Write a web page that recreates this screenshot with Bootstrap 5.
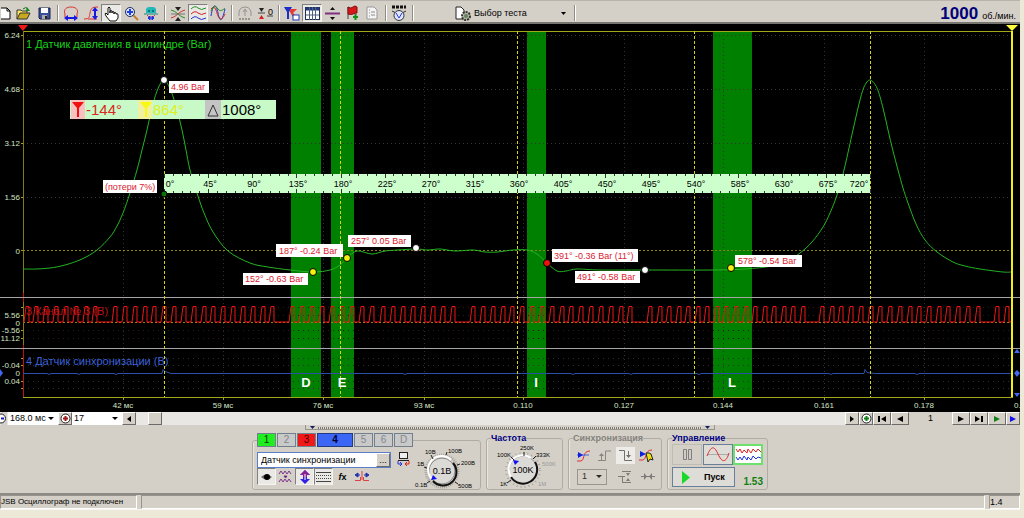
<!DOCTYPE html>
<html lang="ru">
<head>
<meta charset="utf-8">
<meta name="viewport" content="width=device-width, initial-scale=1">
<title>USB Осциллограф</title>
<link href="https://cdn.jsdelivr.net/npm/bootstrap@5.3.0/dist/css/bootstrap.min.css" rel="stylesheet">
<script src="https://cdn.jsdelivr.net/npm/bootstrap@5.3.0/dist/js/bootstrap.bundle.min.js"></script>
<style>
  :root { --face: #d4d0c8; --hi: #f6f4ee; --lo: #808080; }
  body { background: #ece9d8; font: 9px/10px "Liberation Sans", sans-serif; color: #000; }
  .app { margin-right: 4px; background: var(--face); }
  .btn { --bs-btn-padding-x: 0; --bs-btn-padding-y: 0; --bs-btn-font-size: 9px; --bs-btn-line-height: 10px; --bs-btn-border-radius: 0; --bs-btn-color: #000; --bs-btn-disabled-border-color: transparent; display: inline-flex; align-items: center; justify-content: center; flex: none; }
  .btn svg, .glyph { display: block; flex: none; overflow: visible; }
  .toolbar { height: 24px; padding-top: 3px; border-top: 1px solid #b8b4ac; border-bottom: 2px solid #77756f; overflow: hidden; }
  .tool { width: 20px; height: 18px; }
  .tool-first { width: 14px; }
  .tool.active, .mini.active { background: #ebe9e5; border-color: var(--lo) var(--hi) var(--hi) var(--lo); }
  .tool:disabled { border-color: transparent; }
  .rule { width: 7px; height: 16px; flex: none; background: linear-gradient(90deg, transparent 3px, #908c84 3px 4px, #fff 4px 5px, transparent 5px); }
  .test-menu { width: 117px; margin-left: 38px; gap: 3px; justify-content: flex-start; height: 18px; }
  .rpm { font-size: 17px; font-weight: 700; color: #000078; line-height: 17px; }
  .scope { display: block; width: 100%; height: auto; background: #000; }
  .scroller { height: 13px; background: #e9e7e3; }
  .step { height: 13px; background: var(--face); border: 1px solid; border-color: #fff #6c6a66 #6c6a66 #fff; }
  .w-step { width: 18px; } .w-small { width: 14px; }
  .thumb { margin-left: 12px; }
  .pick { appearance: none; border: 0; border-radius: 0; padding: 0 0 0 2px; height: 13px; width: 50px; font-size: 9px; line-height: 13px; background: #fff url("data:image/svg+xml,%3Csvg xmlns='http://www.w3.org/2000/svg' width='6' height='3'%3E%3Cpath d='M0 0h6L3 3z'/%3E%3C/svg%3E") no-repeat right 4px center; }
  .pick-sync { width: 36px; height: 16px; border: 1px solid #8c8880; background-color: var(--face); padding-left: 4px; opacity: .8; }
  .page-no { width: 43px; line-height: 13px; background: var(--face); }
  .splitter { width: 410px; height: 5px; border: 1px solid #98948c; border-top: 0; background: repeating-linear-gradient(90deg, #77756f 0 1px, #dedbd4 1px 2px) 12px 2px / 384px 2px no-repeat; }
  .panel { padding: 3px 0; gap: 5px; border-bottom: 2px solid #8c8a84; }
  .gbox { min-width: 0; height: 57px; border: 1px solid #b0aca4; border-radius: 3px; padding: 0 4px; flex: none; box-shadow: inset 1px 0 0 #e8e5de; }
  .gbox legend { float: none; width: auto; margin: 0; font-size: 9px; line-height: 10px; font-weight: 700; color: #000080; }
  .gbox .off-title { color: #84827c; }
  .g-chan { width: 229px; } .g-freq { width: 77px; } .g-sync { width: 94px; } .g-ctl { width: 101px; }
  .chan-row { gap: 1px; }
  .chan { width: 19px; height: 14px; border: 1px solid #70808c; color: #84888c; background: #c8c9c8; font-size: 10px; }
  .chan-wide { width: 36px; }
  .chan-1 { background: #20ee20; color: #064006; } .chan-3 { background: #f01818; color: #500000; } .chan-4 { background: #3c66f4; color: #000030; font-weight: 700; border-color: #223a80; }
  .name-box { width: 134px; height: 16px; background: #fff; border: 1px solid #5a7ec8; }
  .name-box input { min-width: 0; font-size: 9px; border: 0; padding: 0 0 0 3px; background: transparent; }
  .mini { width: 19px; height: 17px; }
  .mini:disabled { border-color: transparent; opacity: .6; }
  .mini.lit { background: #fff; }
  .ctl-rows { display: grid; gap: 2px; padding-top: 1px; }
  .ctl { width: 30px; height: 21px; border: 1px solid #6a8098; background: #dedcd7; }
  .ctl-off { border-color: #b4b2ac; background: #cfccc5; }
  .ctl-off:disabled { border-color: #b4b2ac; }
  .ctl-on { background: #fff; border: 2px solid #6ee06e; }
  .start { width: 63px; height: 20px; border: 1px solid #6a8098; background: #dedcd7; font-weight: 700; gap: 14px; }
  .ver { color: #108010; font-size: 10px; font-weight: 700; }
  .status { height: 15px; border-bottom: 1px solid #f8f6f0; }
  .cell { border: 1px solid; border-color: #98948c #fff #fff #98948c; line-height: 12px; white-space: nowrap; overflow: hidden; }
  .cell-first { width: 137px; font-size: 8px; } .cell-last { width: 31px; }
  svg text { font-family: "Liberation Sans", sans-serif; }
  .axis text { font-size: 8px; fill: #d4e4c4; }
  .ttl { font-size: 11px; }
</style>
</head>
<body>
<main class="app">
  <div class="toolbar d-flex align-items-center" role="toolbar" aria-label="Инструменты">
    <button class="btn tool tool-first" aria-label="Новый"><svg width="12" height="14" viewBox="0 0 12 14"><path d="M0 2h6l3 3v8H0" fill="#fff" stroke="#000"/><path d="M6 2v3h3" fill="none" stroke="#000"/></svg></button>
    <button class="btn tool" aria-label="Открыть"><svg width="16" height="14" viewBox="0 0 16 14"><path d="M1 13V4h4l1 1h5v3" fill="#ffe860" stroke="#333"/><path d="M1 13l3-6h10l-3 6z" fill="#c8a820" stroke="#333"/><path d="M7 3q3-3 5 0" fill="none" stroke="#0a7010"/><path d="M11 1l3 4h-4z" fill="#0a9010"/></svg></button>
    <button class="btn tool" aria-label="Сохранить"><svg width="13" height="13" viewBox="0 0 13 13"><path d="M1 1h11v11H2l-1-1z" fill="#3850a0" stroke="#182040"/><path d="M3 1h7v5H3z" fill="#fff"/><path d="M4 8h5v4H4z" fill="#aaa"/><path d="M7 9h2v3H7z" fill="#222"/></svg></button>
    <span class="rule"></span>
    <button class="btn tool" aria-label="Цикл"><svg width="16" height="15" viewBox="0 0 16 15"><path d="M2 8C0 3 4 1 8 1s8 2 6 7M2 8v3M14 8v3" fill="none" stroke="#e03030"/><path d="M4 12h8" stroke="#1818e0" stroke-width="2"/><path d="M1 12l4-3v6zM15 12l-4-3v6z" fill="#1818e0"/></svg></button>
    <button class="btn tool" aria-label="Амплитуда"><svg width="16" height="15" viewBox="0 0 16 15"><path d="M1 13c6 0 5-2 6-6s1-6 8-6M5 13h9" fill="none" stroke="#e03030"/><path d="M12 4v7" stroke="#1818e0" stroke-width="2"/><path d="M12 1l3 4H9zM12 14l3-4H9z" fill="#1818e0"/></svg></button>
    <button class="btn tool active" aria-label="Рука"><svg width="15" height="15" viewBox="0 0 15 15"><path d="M4 9V2q1-2 2 0v5V5q1-1 2 0v2-1q1-1 2 0v2-1q1-1 2 0v1q2-1 2 1v3l-2 3H6L2 10q-2-3 0-3z" fill="#fff" stroke="#111"/></svg></button>
    <button class="btn tool" aria-label="Увеличить"><svg width="15" height="15" viewBox="0 0 15 15"><path d="M9 9l5 5" stroke="#c08030" stroke-width="2"/><circle cx="6" cy="6" r="4.500" fill="#dce8ff" stroke="#222a60"/><path d="M3 6h6M6 3v6" stroke="#2040e0" stroke-width="2"/></svg></button>
    <button class="btn tool" aria-label="Сжать"><svg width="16" height="15" viewBox="0 0 16 15"><path d="M3 7V3q1-2 3-2h4q2 0 3 2v4z" fill="#20b8b8"/><path d="M5 4h2v2H5zM9 4h2v2H9z" fill="#0a7878"/><path d="M1 8h14" stroke="#188"/><path d="M4 9l3 3M12 9l-3 3" stroke="#e04040"/><path d="M5 12h6M5 12l2-2v4zM11 12l-2-2v4z" stroke="#2030e0" fill="#2030e0"/></svg></button>
    <span class="rule"></span>
    <button class="btn tool" aria-label="Совместить"><svg width="16" height="15" viewBox="0 0 16 15"><path d="M1 4q4 1 7 4t7 4" fill="none" stroke="#209020"/><path d="M1 12q4-1 7-4t7-4" fill="none" stroke="#d03030"/><path d="M1 8h14" stroke="#777"/><path d="M5 1h6L8 5zM5 15h6l-3-4z" fill="#222"/></svg></button>
    <button class="btn tool active" aria-label="Раздельно"><svg width="15" height="15" viewBox="0 0 15 15" fill="none"><path d="M0 3q4-4 7-1t8 0" stroke="#209020"/><path d="M0 8q4-4 7-1t8 0" stroke="#d02020"/><path d="M0 13q4-4 7-1t8 0" stroke="#2030d0"/></svg></button>
    <button class="btn tool" aria-label="Наложить"><svg width="16" height="14" viewBox="0 0 16 14" fill="none"><path d="M1 10C3-3 6-3 8 7s4 9 7-4" stroke="#2030d0"/><path d="M1 3c3-4 5 0 6 4s4 10 8 1" stroke="#d02020"/><path d="M1 5c3-6 5-5 7-2s5 1 7-1" stroke="#209020"/></svg></button>
    <span class="rule"></span>
    <button class="btn tool" aria-label="Авто" disabled><svg width="14" height="15" viewBox="0 0 14 15" fill="none" stroke="#777"><path d="M1 10Q0 1 7 1t6 9M7 3v7M5 6l2-3 2 3"/><path d="M1 13h12" stroke-dasharray="2 1" stroke-width="2"/></svg></button>
    <button class="btn tool" aria-label="Обнулить"><svg width="17" height="13" viewBox="0 0 17 13"><path d="M1 6h7M10 9h6" stroke="#444"/><path d="M2 1h5L4.500 5z" fill="#222"/><path d="M2 12h5L4.500 8z" fill="#d02020"/><text x="11" y="8" font-size="9">0</text></svg></button>
    <span class="rule"></span>
    <button class="btn tool" aria-label="Фильтр"><svg width="16" height="15" viewBox="0 0 16 15"><path d="M0 1h8L5 6v7H3V6z" fill="#1830c8"/><path d="M6 3h7l-4 4 3 3-3 1-3-5z" fill="#e83838"/><rect x="9" y="9" width="6" height="5" fill="#fff" stroke="#2038b0"/></svg></button>
    <button class="btn tool active" aria-label="Таблица"><svg width="15" height="13" viewBox="0 0 15 13"><rect x=".5" y=".5" width="14" height="12" fill="#fff" stroke="#203050"/><path d="M1 2h13" stroke="#203880" stroke-width="3"/><path d="M4.500 0v13M7.500 0v13M10.500 0v13M1 8h13" stroke="#506080"/></svg></button>
    <button class="btn tool" aria-label="Разделитель"><svg width="15" height="13" viewBox="0 0 15 13"><path d="M0 6.500h15" stroke="#803080" stroke-width="2"/><path d="M5 3l2.500-3L10 3zM5 10l2.500 3L10 10z" fill="#111"/></svg></button>
    <button class="btn tool" aria-label="Добавить метку"><svg width="13" height="14" viewBox="0 0 13 14"><path d="M2 1v12" stroke="#444"/><path d="M2 1q3 2 5 0t4 0v6q-2 0-4 1t-5 0z" fill="#d81818" stroke="#801010"/><path d="M7 11h5M9.500 8v6" stroke="#109018" stroke-width="2"/></svg></button>
    <button class="btn tool" aria-label="Отчёт"><svg width="12" height="14" viewBox="0 0 12 14"><path d="M1 1h7l3 3v9H1z" fill="#f4f4f4" stroke="#999"/><path d="M3 4h1M3 7h1M3 10h1M5 6h4M5 9h4" stroke="#888"/></svg></button>
    <span class="rule"></span>
    <button class="btn tool" aria-label="Авто измерение"><svg width="16" height="17" viewBox="0 0 16 17"><path d="M1 2h14" stroke="#111" stroke-width="3" stroke-dasharray="3 1"/><path d="M1 6l4 2M15 6l-4 2" stroke="#333"/><circle cx="8" cy="10.500" r="5" fill="#dfe6ff" stroke="#333"/><path d="M5 8l3 5 3-5" fill="none" stroke="#2838d0"/></svg></button>
    <span class="rule"></span>
    <button class="btn test-menu"><svg width="16" height="15" viewBox="0 0 16 15"><path d="M1 1h5l3 3v9H1z" fill="#fff" stroke="#222"/><circle cx="11" cy="10" r="4" fill="#b8b8a0" stroke="#333" stroke-dasharray="2 1" stroke-width="2"/><circle cx="11" cy="10" r="2" fill="#668066"/></svg><span>Выбор теста</span><svg class="ms-auto me-1" width="5" height="3" viewBox="0 0 5 3"><path d="M0 0h5L2.500 3z"/></svg></button>
    <span class="rule"></span>
    <div class="ms-auto d-flex align-items-baseline gap-1 pe-1"><span class="rpm">1000</span><span>об./мин.</span></div>
  </div>

  <svg class="scope" viewBox="0 24 1020 388" role="img" aria-label="Осциллограмма давления в цилиндре">
    <g fill="#008000"><path d="M291 31h30v366h-30zM331 31h23v366h-23zM527 31h19v366h-19zM713 31h39v366h-39z"/></g>
    <g id="grid" fill="none" shape-rendering="crispEdges"></g>
    <g fill="none" shape-rendering="crispEdges">
      <path d="M23 31.500h990M23 397.500h990" stroke="#a0a818"/>
      <path d="M23.500 31v366" stroke="#807c10"/><path d="M23.500 293v9M23.500 345v52" stroke="#c01010"/>
      <path d="M0 297.500h1020M0 348.500h1020" stroke="#a8a4a8"/>
      <path d="M23 250.500h989" stroke="#8a8414" stroke-dasharray="2 2"/>
      <path d="M23 322.500h989" stroke="#a08010" stroke-dasharray="2 2"/>
    </g>
    <g class="axis" text-anchor="end">
      <text x="20" y="38">6.24</text><text x="20" y="92">4.68</text><text x="20" y="146">3.12</text><text x="20" y="200">1.56</text><text x="20" y="254">0</text>
      <text x="20" y="318">5.56</text><text x="20" y="326">0</text><text x="20" y="333">-5.56</text><text x="20" y="341">11.12</text>
      <text x="20" y="368">-0.04</text><text x="20" y="376">0</text><text x="20" y="384">0.04</text>
    </g>
    <g class="axis" text-anchor="middle">
      <text x="123" y="408">42 мс</text><text x="223" y="408">59 мс</text><text x="323" y="408">76 мс</text><text x="424" y="408">93 мс</text><text x="523" y="408">0.110</text><text x="624" y="408">0.127</text><text x="723" y="408">0.144</text><text x="824" y="408">0.161</text><text x="924" y="408">0.178</text><text x="1014" y="408" text-anchor="start">0.</text>
    </g>
    <text class="ttl" x="26" y="48" fill="#18d018">1 Датчик давления в цилиндре (Bar)</text>
    <text class="ttl" x="26" y="315" fill="#b81414">3 Канал № 3 (В)</text>
    <text class="ttl" x="26" y="365" fill="#3c60d8">4 Датчик синхронизации (В)</text>
    <path id="pulses" fill="none" stroke="#ee1414"/>
    <path d="M23 373.500h24l2 1 2-1h26l2 1 2-1h33l2 1 2-1h44l1-4 2 2 6 2h232l2 1 2-1h164l2 1 2-1h54l2 1 2-1h64l2 1 2-1h128l2 1 2-1h31l1-4 2 3 8 1h40l2 1 2-1h94" fill="none" stroke="#2c50a8"/>
    <path id="pressure" fill="none" stroke="#24b424"/>
    <path d="M164.500 31v366M340.500 31v366M517.500 31v366M694.500 31v366M870.500 31v366" stroke="#d8d414" stroke-dasharray="3 2" shape-rendering="crispEdges"/>
    <path d="M1011 31h2v366h-2z" fill="#f0f018"/><path d="M1006 25h12l-6 6z" fill="#ffff40"/>
    <path d="M18 25h10l-5 6z" fill="#f01818"/>
    <path d="M0 369l3 4-3 4zM1014 353l3-4 3 4zM1014 373l3-3 3 3-3 4zM1014 393h6l-3 4z" fill="#4068f0"/>

    <rect x="164" y="174" width="706" height="19" fill="#ccffcc"/>
    <path id="ticks" stroke="#333" shape-rendering="crispEdges"/>
    <g id="degrees" font-size="9" text-anchor="middle"></g>

    <rect x="70" y="100" width="206" height="19" fill="#c8fac8"/>
    <rect x="71" y="100" width="14" height="19" fill="#fbc0c0"/><rect x="138" y="100" width="14" height="19" fill="#f0f0a0"/><rect x="205" y="100" width="16" height="19" fill="#c4c4c4"/>
    <path d="M72 102h12l-5 6v9h-2v-9z" fill="#f01010"/><path d="M140 102h12l-5 6v9h-2v-9z" fill="#f8f810"/><path d="M213 105l5 11h-10z" fill="none" stroke="#333"/>
    <g font-size="15"><text x="86" y="115" fill="#d82820">-144°</text><text x="153" y="115" fill="#dff020">864°</text><text x="222" y="115">1008°</text></g>

    <g fill="#fff"><path d="M169 81h40v12h-40zM103 180h54v13h-54zM276 244h67v13h-67zM348 235h63v12h-63zM243 273h65v12h-65zM552 249h86v13h-86zM575 271h65v12h-65zM735 255h67v12h-67z"/></g>
    <g font-size="9" fill="#dc2030"><text x="171" y="90">4.96 Bar</text><text x="105" y="190">(потери 7%)</text><text x="279" y="254">187° -0.24 Bar</text><text x="351" y="244">257° 0.05 Bar</text><text x="245" y="282">152° -0.63 Bar</text><text x="554" y="259">391° -0.36 Bar (11°)</text><text x="577" y="280">491° -0.58 Bar</text><text x="738" y="264">578° -0.54 Bar</text></g>
    <g stroke="#000"><g fill="#fff"><circle cx="164" cy="80" r="3.500"/><circle cx="416" cy="248" r="3.500"/><circle cx="645" cy="270" r="3.500"/></g><g fill="#f4f010"><circle cx="313" cy="272" r="3.500"/><circle cx="347" cy="258" r="3.500"/><circle cx="731" cy="268" r="3.500"/></g><circle cx="547" cy="263" r="3.500" fill="#f01010"/><circle cx="164" cy="194" r="3" fill="#087008"/></g>
    <g font-size="13" font-weight="700" fill="#fff" text-anchor="middle"><text x="306" y="387">D</text><text x="342" y="387">E</text><text x="536" y="387">I</text><text x="732" y="387">L</text></g>
  </svg>

  <div class="scroller d-flex">
    <button class="btn" aria-label="Уменьшить"><svg width="6" height="13" viewBox="0 0 6 13"><path d="M0 0h6v13H0z" fill="#d4d0c8"/><circle cx="0" cy="6.500" r="4.500" fill="#fff" stroke="#222"/><path d="M0 6.500h3" stroke="#1818c0" stroke-width="2"/></svg></button>
    <select class="pick" aria-label="Развёртка"><option>168.0 мс</option></select>
    <button class="btn step w-small" aria-label="Увеличить масштаб"><svg width="11" height="11" viewBox="0 0 11 11"><circle cx="5.500" cy="5.500" r="4.500" fill="#fff" stroke="#222"/><path d="M3 5.500h5M5.500 3v5" stroke="#a01818" stroke-width="2"/></svg></button>
    <select class="pick" aria-label="Номер"><option>17</option></select>
    <button class="btn step w-small" aria-label="Влево"><svg width="4" height="6" viewBox="0 0 4 6"><path d="M4 0v6L0 3z"/></svg></button>
    <button class="btn step w-small thumb" aria-label="Ползунок"></button>
    <button class="btn step w-small ms-auto" aria-label="Вправо"><svg width="4" height="6" viewBox="0 0 4 6"><path d="M0 0v6l4-3z"/></svg></button>
    <button class="btn step w-small" aria-label="Добавить"><svg width="11" height="11" viewBox="0 0 11 11"><circle cx="5.500" cy="5.500" r="4.500" fill="#fff" stroke="#222"/><path d="M3 5.500h5M5.500 3v5" stroke="#108018" stroke-width="2"/></svg></button>
    <button class="btn step w-step" aria-label="В начало"><svg width="8" height="6" viewBox="0 0 8 6"><path d="M0 0h2v6H0zM8 0v6L3 3z"/></svg></button>
    <button class="btn step w-step" aria-label="Назад"><svg width="6" height="6" viewBox="0 0 6 6"><path d="M6 0v6L0 3z"/></svg></button>
    <span class="page-no text-center">1</span>
    <button class="btn step w-step" aria-label="Вперёд"><svg width="6" height="6" viewBox="0 0 6 6"><path d="M0 0v6l6-3z"/></svg></button>
    <button class="btn step w-step" aria-label="В конец"><svg width="8" height="6" viewBox="0 0 8 6"><path d="M6 0h2v6H6zM0 0v6l5-3z"/></svg></button>
    <button class="btn step w-step" aria-label="Воспроизвести"><svg width="6" height="6" viewBox="0 0 6 6"><path d="M0 0v6l6-3z" fill="#108018"/></svg></button>
    <button class="btn step w-small" aria-label="Запись"><svg width="6" height="6" viewBox="0 0 6 6"><path d="M0 0v6l6-3z" fill="#1010f0"/></svg></button>
  </div>

  <div class="splitter mx-auto d-flex justify-content-between px-1"><svg class="glyph" width="5" height="4" viewBox="0 0 5 4"><path d="M0 1h5L2.500 4z" fill="#102060"/></svg><svg class="glyph" width="5" height="4" viewBox="0 0 5 4"><path d="M0 1h5L2.500 4z" fill="#102060"/></svg></div>

  <div class="panel d-flex justify-content-center">
    <fieldset class="gbox g-chan">
      <legend class="d-flex chan-row">
        <button class="btn chan chan-1">1</button><button class="btn chan">2</button><button class="btn chan chan-3">3</button><button class="btn chan chan-wide chan-4">4</button><button class="btn chan">5</button><button class="btn chan">6</button><button class="btn chan">D</button>
      </legend>
      <div class="d-flex justify-content-between">
        <div class="pt-1">
          <div class="d-flex align-items-center gap-1">
            <div class="name-box d-flex"><input class="flex-fill" aria-label="Имя канала" value="Датчик синхронизации"><button class="btn step w-small h-100" aria-label="Выбрать датчик">...</button></div>
            <button class="btn" aria-label="Сменить"><svg width="15" height="15" viewBox="0 0 15 15"><rect x="3.500" y=".5" width="8" height="6" fill="#eee" stroke="#222"/><path d="M2 8.500h11" stroke="#222"/><path d="M2 9v3h4M4 10l2 2-2 2" fill="none" stroke="#2030e0"/><path d="M13 9v3H9M11 10l-2 2 2 2" fill="none" stroke="#e02020"/></svg></button>
          </div>
          <div class="d-flex">
            <button class="btn mini active" aria-label="Показать"><svg width="11" height="8" viewBox="0 0 11 8"><path d="M0 4q5-5 11 0-5 5-11 0z" fill="#666"/><circle cx="6" cy="4" r="3"/></svg></button>
            <button class="btn mini" aria-label="Инвертировать"><svg width="13" height="13" viewBox="0 0 13 13" fill="none" stroke="#803090"><path d="M0 4l2-3 2 3 2-3 2 3 2-3 2 3M0 12l2-3 2 3 2-3 2 3 2-3 2 3"/><path d="M5 6h3L6.500 8z" fill="#222"/></svg></button>
            <button class="btn mini active" aria-label="Сдвиг"><svg width="12" height="14" viewBox="0 0 12 14"><path d="M6 0l5 5H8v4h3l-5 5-5-5h3V5H1z" fill="#3020e0"/><path d="M6 0l5 5H8v2H4V5H1z" fill="#8c2090"/><path d="M6 4v6" stroke="#fff"/></svg></button>
            <button class="btn mini active" aria-label="Сетка"><svg width="15" height="12" viewBox="0 0 15 12"><path d="M0 1.500h15M0 10.500h15" stroke="#444"/><path d="M0 4.500h15M0 7.500h15" stroke="#444" stroke-dasharray="1 1"/></svg></button>
            <button class="btn mini" aria-label="Функция"><b><i>f</i>x</b></button>
            <button class="btn mini" aria-label="Фронт"><svg width="14" height="11" viewBox="0 0 14 11"><path d="M0 9.500h5.500V6M14 9.500H8.500V6M7 0v9" fill="none" stroke="#e04040"/><path d="M0 4l3-2v4zM2 4h3M14 4l-3-2v4zM9 4h3" fill="#2030b0" stroke="#2030b0"/></svg></button>
          </div>
        </div>
        <svg class="glyph" width="62" height="42" viewBox="415 447 62 42" role="img" aria-label="Диапазон 0.1 В">
          <circle cx="443" cy="471" r="16" fill="none" stroke="#aaa69e" stroke-width="3" stroke-dasharray="1 1"/>
          <circle cx="443" cy="471" r="13" fill="#dcdad6" stroke="#888"/><path d="M454 463a13 13 0 0 1-20 18" fill="none" stroke="#111" stroke-width="2"/><path d="M433 479a13 13 0 0 1 19-19" fill="none" stroke="#fff" stroke-width="2"/>
          <path d="M434 475l4 4-6 1z" fill="#1010f0"/>
          <path d="M431 481l-3 2M428 468l-3-1M434 459l-2-4M447 455l1-3M458 465l3-1M456 482l3 2" stroke="#222"/>
          <text x="443" y="474" font-size="9" text-anchor="middle">0.1В</text>
          <g font-size="6"><text x="416" y="487">0.1В</text><text x="418" y="466">1В</text><text x="426" y="454">10В</text><text x="449" y="453">100В</text><text x="462" y="465">200В</text><text x="459" y="488">500В</text></g>
        </svg>
      </div>
    </fieldset>

    <fieldset class="gbox g-freq">
      <legend>Частота</legend>
      <svg class="glyph" width="68" height="44" viewBox="490 444 68 44" role="img" aria-label="Частота 100 К">
        <circle cx="522" cy="471" r="17" fill="none" stroke="#aaa69e" stroke-width="2" stroke-dasharray="1 3"/>
        <circle cx="522" cy="471" r="14" fill="#dcdad6" stroke="#999"/><path d="M534 463a14 14 0 0 1-24 15" fill="none" stroke="#111" stroke-width="2"/><path d="M510 478a14 14 0 0 1 20-19" fill="none" stroke="#fff" stroke-width="2"/>
        <path d="M512 461l6 1-4 4z" fill="#1010f0"/><path d="M510 458l3 3M523 453v4M535 457l-3 3M506 484l4-3" stroke="#222"/>
        <text x="522" y="474" font-size="9" text-anchor="middle">100K</text>
        <g font-size="6"><text x="496" y="458">100K</text><text x="519" y="451">250K</text><text x="535" y="458">333K</text><text x="499" y="487">1K</text><g fill="#999"><text x="541" y="467">500K</text><text x="537" y="487">1M</text></g></g>
      </svg>
    </fieldset>

    <fieldset class="gbox g-sync">
      <legend class="off-title">Синхронизация</legend>
      <div class="d-flex justify-content-around align-items-center pt-1">
        <button class="btn mini" aria-label="Фронт"><svg width="13" height="12" viewBox="0 0 13 12"><path d="M0 11h4q2 0 3-5t6-5" fill="none" stroke="#e03030"/><path d="M0 5h12" stroke="#4060e0"/><path d="M1 2l5 3-5 3z" fill="#1020e0"/></svg></button>
        <button class="btn mini" aria-label="По фронту" disabled><svg width="13" height="11" viewBox="0 0 13 11"><path d="M0 10.500h7.500V1H13M3.500 10V4" fill="none" stroke="#555"/><path d="M1 6l2.500-3L6 6z" fill="#555"/></svg></button>
        <button class="btn mini lit" aria-label="По спаду" disabled><svg width="13" height="11" viewBox="0 0 13 11"><path d="M0 .5h5.500v10H13M9.500 1v6" fill="none" stroke="#333"/><path d="M7 5h5L9.500 8z" fill="#333"/></svg></button>
        <button class="btn mini" aria-label="Автосинхронизация"><svg width="15" height="14" viewBox="0 0 15 14"><path d="M0 11h4q2 0 3-5t6-5" fill="none" stroke="#e03030"/><path d="M1 2l6 3-6 3z" fill="#1020e0"/><path d="M7 4l2 9 2-3 3 1-2-6-2-1z" fill="#f0e010" stroke="#222"/></svg></button>
      </div>
      <div class="d-flex align-items-center gap-1 pt-1">
        <select class="pick pick-sync ms-1" aria-label="Канал синхронизации"><option>1</option></select>
        <button class="btn mini ms-1" aria-label="Уровень" disabled><svg width="13" height="12" viewBox="0 0 13 12"><path d="M0 5.500h7M4 .5h9M4 11.500h9M4.500 5v6" stroke="#444"/><path d="M8 2h4l-2 3zM8 10h4l-2-3z" fill="#444"/></svg></button>
        <button class="btn mini" aria-label="Сжатие" disabled><svg width="14" height="7" viewBox="0 0 14 7"><path d="M0 3.500h14" stroke="#444"/><path d="M3 0v7l3-3.500zM11 0v7L8 3.500z" fill="#444"/></svg></button>
      </div>
    </fieldset>

    <fieldset class="gbox g-ctl px-0">
      <legend class="ms-1">Управление</legend>
      <div class="ctl-rows">
        <div class="d-flex justify-content-between px-1">
          <button class="btn ctl ctl-off" aria-label="Пауза" disabled><svg width="9" height="11" viewBox="0 0 9 11"><path d="M.5.500h3v10h-3zM5.500.500h3v10h-3z" fill="#ccc" stroke="#555"/></svg></button>
          <button class="btn ctl" aria-label="Один кадр"><svg width="22" height="15" viewBox="0 0 22 15"><path d="M0 7.500h22" stroke="#aaa"/><path d="M0 9C4-1 7-2 11 7s8 9 11-1" fill="none" stroke="#e02828"/></svg></button>
          <button class="btn ctl ctl-on" aria-label="Непрерывно"><svg width="25" height="15" viewBox="0 0 25 15" fill="none"><path d="M0 2l2 3 2-3 2 4 2-3 3 3 1-4 3 4 2-4 3 3 2-3 3 3" stroke="#e02020"/><path d="M0 10l2 3 2-3 2 3 2-4 3 4 1-3 3 3 2-4 3 3 2-2 3 1" stroke="#2030e0"/></svg></button>
        </div>
        <div class="d-flex justify-content-between align-items-end px-1">
          <button class="btn start"><svg width="8" height="13" viewBox="0 0 8 13"><path d="M0 0l8 6.500L0 13z" fill="#18d828"/></svg><span>Пуск</span></button>
          <span class="ver">1.53</span>
        </div>
      </div>
    </fieldset>
  </div>

  <footer class="status d-flex gap-1">
    <div class="cell cell-first">JSB Осциллограф не подключен</div>
    <div class="cell flex-fill"></div>
    <div class="cell cell-last">1.4</div>
  </footer>
</main>

<script>
  const byId = id => document.getElementById(id);

  // Dotted grid: time divisions and level divisions of the three channels
  const times = [123, 223, 323, 424, 523, 624, 723, 824, 924];
  let grid = '<path stroke="#303430" stroke-dasharray="1 3" d="' +
    times.map(x => `M${x}.5 31v366`).join('') + '"/>';
  grid += '<path stroke="#343830" stroke-dasharray="1 3" d="' +
    [35, 89, 143, 197].map(y => `M23 ${y}.5h989`).join('') + '"/>';
  grid += '<path stroke="#301818" stroke-dasharray="1 4" d="' +
    [307, 315, 330, 338].map(y => `M23 ${y}.5h989`).join('') + '"/>';
  grid += '<path stroke="#2c3030" stroke-dasharray="1 4" d="' +
    [358, 365, 381, 388].map(y => `M23 ${y}.5h989`).join('') + '"/>';
  grid += '<path stroke="#a0a818" d="' + times.map(x => `M${x}.5 397v3`).join('') +
    [35, 89, 143, 197, 250, 307, 315, 330, 338, 358, 365, 381, 388].map(y => `M21 ${y}.5h2`).join('') + '"/>';
  byId('grid').innerHTML = grid;

  // Crankshaft sensor: 17 teeth and one gap in each turn
  const turns = [-62, 115, 292, 473, 650, 822, 997, 1174];
  let d = 'M23 322';
  for (let t = 0; t < turns.length - 1; t++) {
    const step = (turns[t + 1] - turns[t]) / 18;
    for (let k = 0; k < 17; k++) {
      const c = Math.round(turns[t] + k * step);
      if (c > 26 && c < 1011) d += `H${c - 3}L${c - 1} 306.5H${c + 2}V322`;
    }
  }
  byId('pulses').setAttribute('d', d + 'H1012');

  // Cylinder pressure, smoothed through the samples
  const pts = [[23,269],[36,269],[50,268],[65,265],[82,259],[97,250],[110,237],[117,226],[123,213],[130,193],[137,170],[142,150],[147,130],[151,112],[157,91],[164,80],[171,91],[177,110],[182,130],[186,150],[190,170],[198,196],[204,213],[213,232],[228,251],[250,263],[268,267],[290,270],[313,272],[330,270],[340,265],[347,258],[357,251],[372,254],[385,251],[398,250],[416,249],[428,250],[440,249],[455,251],[473,250],[485,252],[497,252],[513,250],[527,250],[537,254],[547,263],[557,271],[566,271],[577,269],[600,270],[645,270],[713,270],[745,269],[772,266],[787,261],[800,253],[812,242],[823,227],[830,213],[837,195],[844,170],[849,148],[853,130],[859,104],[864,87],[870,80],[877,88],[883,108],[888,130],[893,151],[898,170],[903,188],[908,203],[916,224],[925,240],[937,252],[953,262],[965,266],[980,269],[1003,272],[1011,272]];
  d = `M${pts[0]}`;
  for (let i = 0; i < pts.length - 1; i++) {
    const a = pts[i - 1] || pts[i], b = pts[i], c = pts[i + 1], e = pts[i + 2] || c;
    d += `C${b[0] + (c[0] - a[0]) / 6} ${b[1] + (c[1] - a[1]) / 6} ${c[0] - (e[0] - b[0]) / 6} ${c[1] - (e[1] - b[1]) / 6} ${c[0]} ${c[1]}`;
  }
  byId('pressure').setAttribute('d', d);

  // Crank angle ruler, a tick each 9 degrees and a number each 45
  const span = 706 / 720;
  let ticks = '', numbers = '';
  for (let a = 0; a <= 720; a += 9) {
    const x = Math.round(164 + a * span), len = a % 45 ? 2 : 4;
    ticks += `M${x}.5 174v${len}M${x}.5 193v-${len}`;
    if (a % 45 === 0) {
      const at = a === 0 ? x + 6 : a === 720 ? x - 11 : x + 2;
      numbers += `<text x="${at}" y="187">${a}°</text>`;
    }
  }
  byId('ticks').setAttribute('d', ticks);
  byId('degrees').innerHTML = numbers;
</script>
</body>
</html>
